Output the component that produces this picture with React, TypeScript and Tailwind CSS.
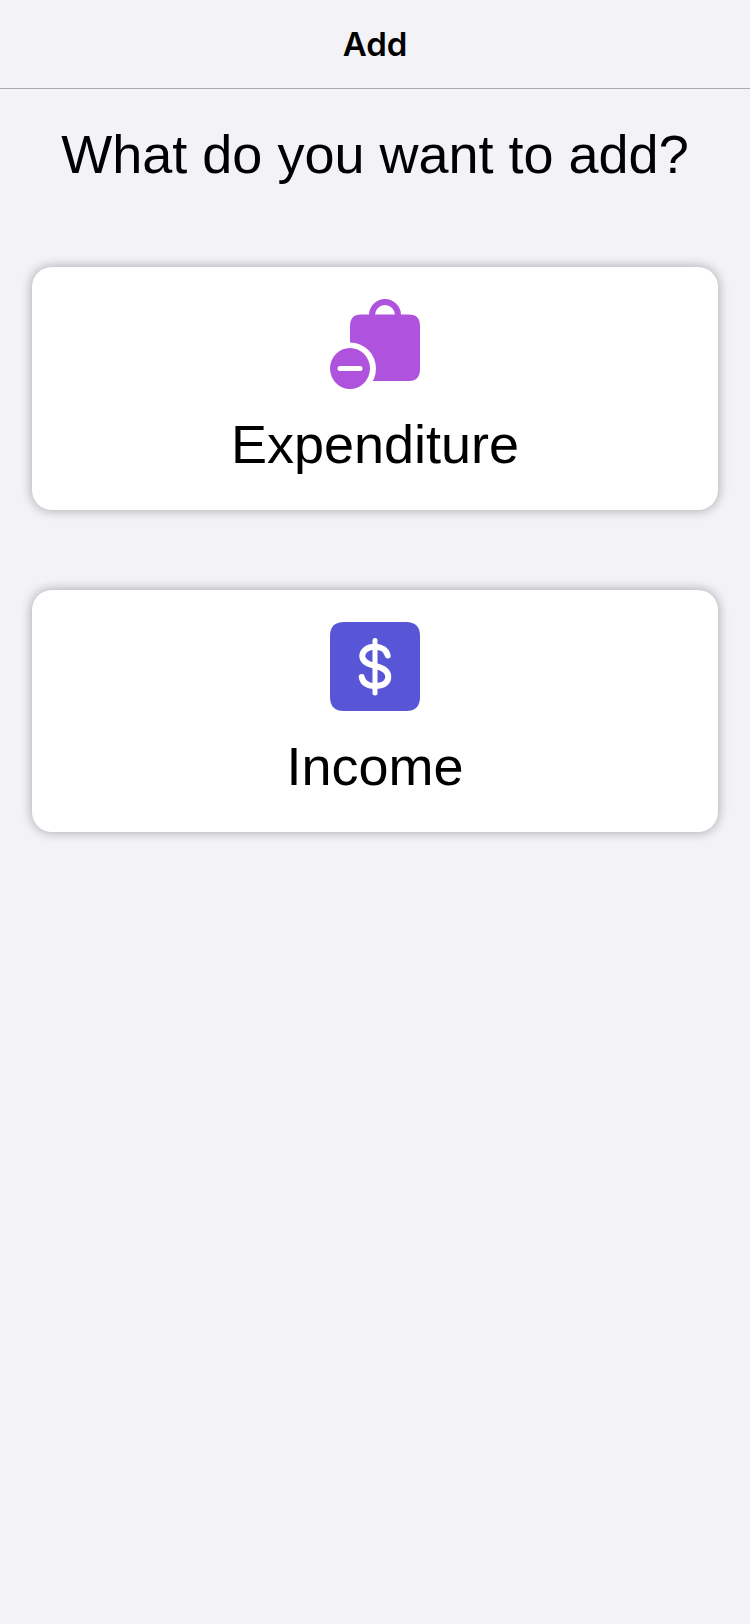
import type { ReactNode } from "react";

function BagMinusIcon() {
  return (
    <svg viewBox="0 0 90 90" className="h-[90px] w-[90px]" aria-hidden="true">
      <path d="M42 17V16a13 13 0 0 1 26 0v1" fill="none" stroke="#af52de" strokeWidth="6" />
      <path
        d="M31 15.500H79Q90 15.500 90 27V70Q90 82 79 82H20V27Q20 15.500 31 15.500Z"
        fill="#af52de"
      />
      <circle cx="20" cy="69.500" r="26" fill="#fff" />
      <ellipse cx="20" cy="69.500" rx="20" ry="20.500" fill="#af52de" />
      <path d="M10 69.500H30" stroke="#fff" strokeWidth="5" strokeLinecap="round" />
    </svg>
  );
}

function DollarSquareIcon() {
  return (
    <svg viewBox="0 0 90 89" className="h-[89px] w-[90px]" aria-hidden="true">
      <path
        d="M14 0H76Q90 0 90 14V75Q90 89 76 89H14Q0 89 0 75V14Q0 0 14 0Z"
        fill="#5856d6"
      />
      <path
        d="M57.700 33.500C56.500 27.800 51.500 24.700 45 24.700C37.500 24.700 32.300 28.500 32.300 34.300C32.300 39.500 36.500 42 45 43.900C54 45.900 58.300 49 58.300 54.800C58.300 61 53 64 45 64C37.500 64 32.800 61 31.700 55"
        fill="none"
        stroke="#fff"
        strokeWidth="6"
        strokeLinecap="round"
        strokeLinejoin="round"
      />
      <path d="M45 18.500V71" stroke="#fff" strokeWidth="5" strokeLinecap="round" />
    </svg>
  );
}

function ChoiceCard({ label, icon }: { label: string; icon: ReactNode }) {
  return (
    <button
      type="button"
      className="flex w-full flex-col items-center gap-5 rounded-[20px] bg-white px-8 pt-8 pb-[30px] shadow-[0_0_12px_rgba(0,0,0,0.33)]"
    >
      {icon}
      <span className="text-[54px] leading-[71px]">{label}</span>
    </button>
  );
}

export default function App() {
  return (
    <div className="min-h-screen bg-[#f2f2f7] font-['Liberation_Sans',Arial,sans-serif] text-black">
      <header className="border-b border-[#a9a9ae] py-6 text-center">
        <h1 className="font-['Inter',sans-serif] text-[33px] leading-10 font-semibold">Add</h1>
      </header>
      <main className="flex flex-col gap-20 px-8 pt-8">
        <h2 className="text-center text-[54px] leading-[66px]">What do you want to add?</h2>
        <ChoiceCard label="Expenditure" icon={<BagMinusIcon />} />
        <ChoiceCard label="Income" icon={<DollarSquareIcon />} />
      </main>
    </div>
  );
}
